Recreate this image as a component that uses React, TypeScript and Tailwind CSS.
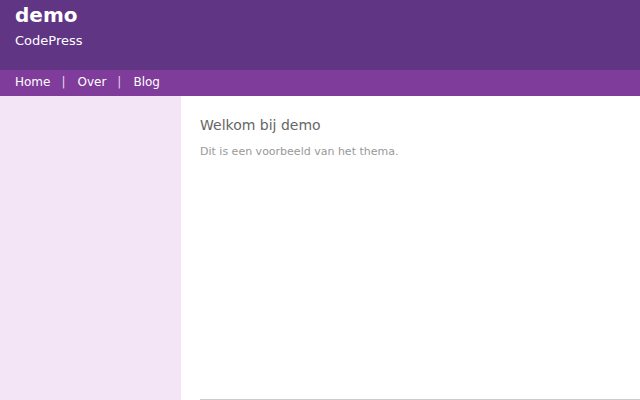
export default function App() {
  const links = ["Home", "Over", "Blog"];
  return (
    <div className="min-h-screen bg-white" style={{ fontFamily: '"DejaVu Sans", sans-serif' }}>
      <header className="h-[70px] bg-[#5f3584] px-[15px] pt-[2px] text-white">
        <h1 className="text-[20px] font-bold leading-[26px]">demo</h1>
        <p className="mt-[4px] text-[13px] leading-[18px]">CodePress</p>
      </header>
      <nav className="flex h-[26px] items-center bg-[#7f3c9b] px-[15px] pb-[2px] text-[12px] text-white">
        {links.map((l, i) => (
          <span key={l} className="flex items-center">
            {i > 0 && <span className="ml-[11px] mr-[12px] text-[#e6d3ee]">|</span>}
            <a href="#">{l}</a>
          </span>
        ))}
      </nav>
      <div className="flex">
        <aside className="h-[304px] w-[181px] shrink-0 bg-[#f3e5f5]" />
        <main className="flex-1 pl-[19px]">
          <div className="h-[303px] pt-[20px]">
            <h2 className="text-[14px] leading-[18px] text-[#666666]">Welkom bij demo</h2>
            <p className="mt-[11px] text-[11px] leading-[14px] text-[#999999]">
              Dit is een voorbeeld van het thema.
            </p>
          </div>
          <div className="border-t border-[#cccccc]" />
        </main>
      </div>
    </div>
  );
}
